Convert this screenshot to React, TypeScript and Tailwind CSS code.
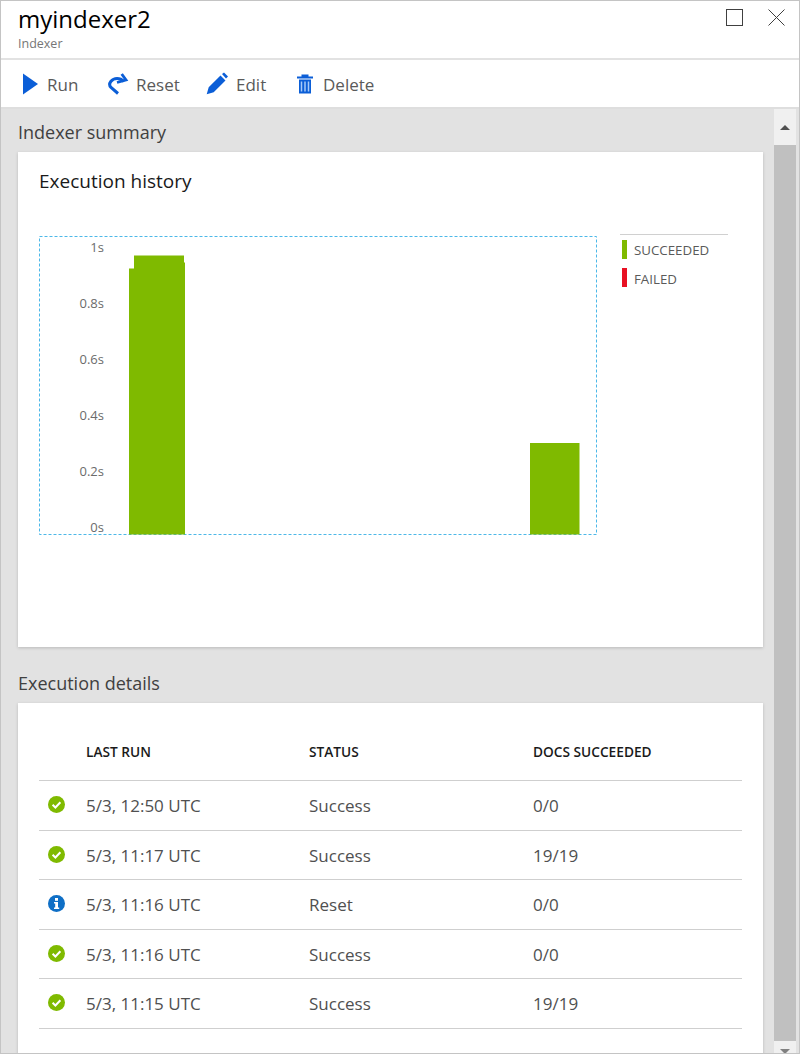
const font = { fontFamily: '"Open Sans", "Noto Sans", sans-serif' };

function Check() {
  return (
    <svg width="17" height="17" viewBox="0 0 17 17">
      <circle cx="8.5" cy="8.5" r="8.5" fill="#7fba00" />
      <path d="M4.6 8.8l2.8 2.7 5-5.2" fill="none" stroke="#fff" strokeWidth="2" />
    </svg>
  );
}

function Info() {
  return (
    <svg width="17" height="17" viewBox="0 0 17 17">
      <circle cx="8.5" cy="8.5" r="8.5" fill="#0f6fc6" />
      <rect x="7" y="3" width="3" height="2.8" fill="#fff" />
      <path d="M6 7h4v5.4h1.2v1.6H6v-1.6h1.2V8.6H6z" fill="#fff" />
    </svg>
  );
}

const rows = [
  { icon: 'ok', run: '5/3, 12:50 UTC', status: 'Success', docs: '0/0' },
  { icon: 'ok', run: '5/3, 11:17 UTC', status: 'Success', docs: '19/19' },
  { icon: 'info', run: '5/3, 11:16 UTC', status: 'Reset', docs: '0/0' },
  { icon: 'ok', run: '5/3, 11:16 UTC', status: 'Success', docs: '0/0' },
  { icon: 'ok', run: '5/3, 11:15 UTC', status: 'Success', docs: '19/19' },
];

const ticks = [
  { label: '1s', y: 16 },
  { label: '0.8s', y: 72 },
  { label: '0.6s', y: 128 },
  { label: '0.4s', y: 184 },
  { label: '0.2s', y: 240 },
  { label: '0s', y: 296 },
];

function Chart() {
  return (
    <svg width="558" height="299" viewBox="0 0 558 299" className="block" style={font}>
      <rect x="0.5" y="0.5" width="557" height="298" fill="none" stroke="#4db8e8" strokeDasharray="3 2" />
      {ticks.map((t) => (
        <text key={t.label} x="65" y={t.y} textAnchor="end" fontSize="13" fill="#6b6b6b">
          {t.label}
        </text>
      ))}
      <path d="M95 19.500H145V26.500H146V298.500H90V32.500H95z" fill="#7fba00" />
      <rect x="491" y="207" width="49.500" height="91.500" fill="#7fba00" />
    </svg>
  );
}

export default function App() {
  return (
    <div className="w-[800px] h-[1054px] bg-white border border-[#c4c4c4] flex flex-col overflow-hidden" style={font}>
      <div className="h-[59px] shrink-0 border-b-2 border-[#e2e2e2] pl-[17px] pr-[14px] flex justify-between">
        <div>
          <div className="text-[24px] leading-[32px] mt-[2px] text-black">myindexer2</div>
          <div className="text-[12.500px] leading-[16px] mt-[1px] text-[#767676]">Indexer</div>
        </div>
        <div className="flex gap-[25px] pt-[8px] h-fit">
          <div className="w-[17px] h-[17px] border border-[#404040]" />
          <svg width="17" height="17" viewBox="0 0 17 17">
            <path d="M0.500 0.500l16 16M16.500 0.500l-16 16" stroke="#404040" strokeWidth="1" />
          </svg>
        </div>
      </div>

      <div className="h-[49px] shrink-0 border-b-2 border-[#dedede] flex items-center pl-[21px] text-[17px] text-[#5a5a5a]">
        <svg width="17" height="22" viewBox="0 0 17 22">
          <path d="M1 0.500L16 11 1 21.500z" fill="#0b5ed7" />
        </svg>
        <span className="ml-[8px] w-[60px] mt-[3px]">Run</span>
        <svg width="22" height="22" viewBox="0 0 22 22">
          <path d="M17 8.500C13 4.500 7 4.500 3.800 8.500C2 11 2.500 13 4 14.500L11 20.500" fill="none" stroke="#0b5ed7" strokeWidth="3" />
          <path d="M14.700 1L19 7 10 9.500" fill="none" stroke="#0b5ed7" strokeWidth="2.800" />
        </svg>
        <span className="ml-[7px] w-[70px] mt-[3px]">Reset</span>
        <svg width="23" height="23" viewBox="0 0 23 23">
          <path d="M0.700 22.300l2-7L14.500 3.500l5 5L7.700 20.300zM16 2l2-1.500 4 4-2 2z" fill="#0b5ed7" />
        </svg>
        <span className="ml-[7px] w-[61px] mt-[3px]">Edit</span>
        <svg width="16" height="20" viewBox="0 0 16 20">
          <path d="M0 2.500h16v2H0zM4.500 0.500h7v2h-7z" fill="#0b5ed7" />
          <path d="M2 5.500h12v14H2z" fill="#0b5ed7" />
          <path d="M4.500 7.500v10M8 7.500v10M11.500 7.500v10" stroke="#a8cbf7" strokeWidth="1.500" />
        </svg>
        <span className="ml-[10px] mt-[3px]">Delete</span>
      </div>

      <div className="flex-1 min-h-0 flex bg-[#e2e2e2]">
        <div className="w-[773px] pl-[17px] pr-[11px]">
          <div className="text-[18px] leading-[24px] pt-[11px] h-[43px] text-[#404040]">Indexer summary</div>
          <div className="bg-white h-[495px] pl-[21px] pt-[17px] shadow-[0_1px_3px_rgba(0,0,0,0.18)]">
            <div className="text-[19px] leading-[24px] text-[#1a1a1a]">Execution history</div>
            <div className="flex mt-[43px]">
              <Chart />
              <div className="ml-[23px] -mt-[2px] w-[108px] h-fit border-t border-[#d0d0d0] pl-[2px] pt-[5px] text-[13.300px] text-[#5a5a5a]">
                <div className="flex items-center gap-[7px] h-[19px]">
                  <div className="w-[5px] h-[19px] bg-[#7fba00]" />
                  <span className="mt-[3px]">SUCCEEDED</span>
                </div>
                <div className="flex items-center gap-[7px] h-[19px] mt-[9px]">
                  <div className="w-[5px] h-[19px] bg-[#e81123]" />
                  <span className="mt-[4px]">FAILED</span>
                </div>
              </div>
            </div>
          </div>
          <div className="text-[18px] leading-[24px] pt-[24px] h-[56px] text-[#404040]">Execution details</div>
          <div className="bg-white h-[400px] px-[21px] shadow-[0_1px_3px_rgba(0,0,0,0.18)]">
            <div className="h-[78px] flex items-center font-semibold text-[13.700px] text-[#1a1a1a] border-b border-[#cfcfcf] pt-[21px]">
              <div className="w-[47px]" />
              <div className="w-[223px]">LAST RUN</div>
              <div className="w-[224px]">STATUS</div>
              <div>DOCS SUCCEEDED</div>
            </div>
            {rows.map((r, i) => (
              <div key={i} className="h-[49.500px] flex items-center text-[17px] text-[#505050] border-b border-[#cfcfcf]">
                <div className="w-[47px] pl-[9px] -mt-[1px]">{r.icon === 'ok' ? <Check /> : <Info />}</div>
                <div className="w-[223px] mt-[1px]">{r.run}</div>
                <div className="w-[224px] mt-[1px]">{r.status}</div>
                <div className="mt-[1px]">{r.docs}</div>
              </div>
            ))}
          </div>
        </div>

        <div className="w-[22px] flex flex-col">
          <div className="h-[36px] bg-[#f0f0f0] flex items-center justify-center">
            <div className="w-0 h-0 border-x-[5px] border-x-transparent border-b-[5px] border-b-[#505050]" />
          </div>
          <div className="flex-1 bg-[#c0c0c0]" />
          <div className="h-[12px] bg-[#f0f0f0] flex justify-center pt-[8px]">
            <div className="w-0 h-0 border-x-[5px] border-x-transparent border-t-[5px] border-t-[#808080]" />
          </div>
        </div>
      </div>
    </div>
  );
}
